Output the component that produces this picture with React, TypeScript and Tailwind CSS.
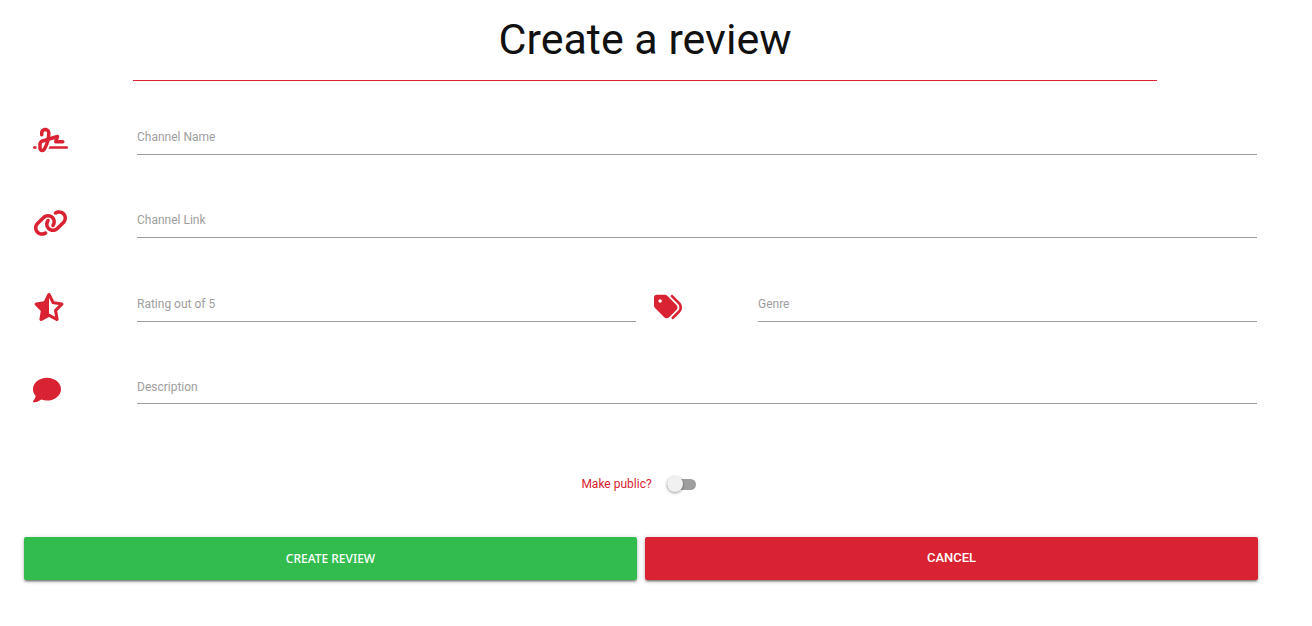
import { useState } from 'react';
import type { ComponentType } from 'react';
import { FaComment, FaLink, FaSignature, FaStarHalfStroke, FaTags } from 'react-icons/fa6';

type FieldProps = {
  id: string;
  label: string;
  icon: ComponentType<{ className?: string }>;
  iconWidth?: string;
  multiline?: boolean;
};

const control =
  'peer block w-full resize-none overflow-hidden border-b border-[#9e9e9e] bg-transparent pt-1 text-xs text-neutral-900 outline-none focus:border-[#d92232]';

const buttonShadow =
  'shadow-[0_2px_2px_0_rgba(0,0,0,0.24),0_3px_1px_-2px_rgba(0,0,0,0.2),0_1px_5px_0_rgba(0,0,0,0.2)]';

function Field({ id, label, icon: Icon, iconWidth = 'w-7', multiline = false }: FieldProps) {
  return (
    <div className="flex min-w-0 flex-1">
      <div className="w-[104px] shrink-0 pl-[9px]">
        <Icon className={`h-7 ${iconWidth} text-[#d92232]`} />
      </div>
      <div className="relative min-w-0 flex-1 px-[9px]">
        {multiline ? (
          <textarea id={id} placeholder=" " rows={1} className={`${control} h-7`} />
        ) : (
          <input id={id} type="text" placeholder=" " className={`${control} h-[29px]`} />
        )}
        <label
          htmlFor={id}
          className="pointer-events-none absolute left-[9px] top-[3px] text-xs leading-4 text-[#9e9e9e] transition-transform peer-focus:-translate-y-4 peer-focus:text-[#d92232] peer-[:not(:placeholder-shown)]:-translate-y-4"
        >
          {label}
        </label>
      </div>
    </div>
  );
}

export default function App() {
  const [isPublic, setIsPublic] = useState(false);

  return (
    <main className="min-h-screen bg-white pr-[22px] pb-6 font-['Roboto',sans-serif]">
      <h1 className="mx-[133px] border-b border-[#d92232] pt-[11px] pb-[13px] text-center text-[43px] leading-14 text-[#111111]">
        Create a review
      </h1>

      <form className="px-6 pt-[45px]" onSubmit={(e) => e.preventDefault()}>
        <div className="flex flex-col gap-[54px]">
          <Field id="channel-name" label="Channel Name" icon={FaSignature} iconWidth="w-[35px]" />
          <Field id="channel-link" label="Channel Link" icon={FaLink} iconWidth="w-[35px]" />
          <div className="flex pt-px">
            <Field id="rating" label="Rating out of 5" icon={FaStarHalfStroke} iconWidth="w-8" />
            <Field id="genre" label="Genre" icon={FaTags} />
          </div>
          <Field id="description" label="Description" icon={FaComment} multiline />
        </div>

        <div className="mt-[72px] flex justify-center">
          <label className="flex cursor-pointer items-center gap-[15px] pr-[13px] text-xs leading-4 text-[#d92232]">
            Make public?
            <input
              type="checkbox"
              role="switch"
              checked={isPublic}
              onChange={(e) => setIsPublic(e.target.checked)}
              className="peer sr-only"
            />
            <span className="flex h-[11px] w-[29px] items-center rounded-full bg-[#9e9e9e] peer-checked:justify-end peer-checked:bg-[#e8909a]">
              <span className="size-4 shrink-0 rounded-full bg-[#f1f1f1] shadow-[0_1px_3px_rgba(0,0,0,0.4)]" />
            </span>
          </label>
        </div>

        <div className="mt-[45px] flex gap-2 pr-2">
          <button
            type="submit"
            className={`h-[43px] flex-1 rounded-xs bg-[#33bc4e] font-['Noto_Sans',sans-serif] text-xs font-medium text-white ${buttonShadow}`}
          >
            CREATE REVIEW
          </button>
          <button
            type="button"
            className={`h-[43px] flex-1 rounded-xs bg-[#d92232] pb-0.5 text-[13px] font-medium text-white ${buttonShadow}`}
          >
            CANCEL
          </button>
        </div>
      </form>
    </main>
  );
}
